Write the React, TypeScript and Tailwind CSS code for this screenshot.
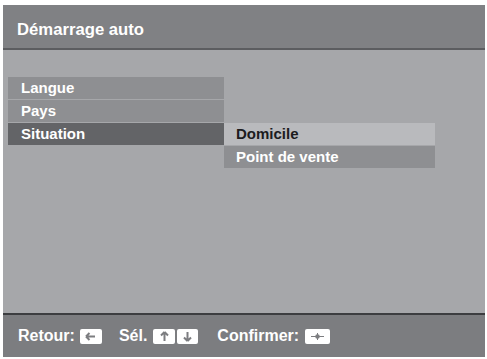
import React from 'react';

// Small white key caps shown in the help bar
const Key = ({ children, w = 'w-[22px]' }: { children: React.ReactNode; w?: string }) => (
  <span className={`inline-flex h-[15px] ${w} items-center justify-center rounded-[2px] bg-white`}>
    {children}
  </span>
);

const ArrowLeft = () => (
  <svg width="11" height="9" viewBox="0 0 11 9">
    <path d="M1 4.5H10M1 4.5L4.5 1M1 4.5L4.5 8" stroke="#7c7d80" strokeWidth="2" fill="none" />
  </svg>
);

const ArrowUp = () => (
  <svg width="9" height="11" viewBox="0 0 9 11">
    <path d="M4.5 1V10M4.5 1L1 4.5M4.5 1L8 4.5" stroke="#7c7d80" strokeWidth="2" fill="none" />
  </svg>
);

const ArrowDown = () => (
  <svg width="9" height="11" viewBox="0 0 9 11">
    <path d="M4.5 10V1M4.5 10L1 6.5M4.5 10L8 6.5" stroke="#7c7d80" strokeWidth="2" fill="none" />
  </svg>
);

const Center = () => (
  <svg width="15" height="9" viewBox="0 0 15 9">
    <path d="M1 4.5H14M7.5 1V8" stroke="#7c7d80" strokeWidth="1" fill="none" />
    <circle cx="7.5" cy="4.5" r="2.3" fill="#7c7d80" />
  </svg>
);

const items = ['Langue', 'Pays', 'Situation'];
const options = ['Domicile', 'Point de vente'];

export default function App() {
  return (
    <div
      className="w-[487px] h-[359px] bg-white pt-[5px] pl-[3px]"
      style={{ fontFamily: '"Liberation Sans", Arial, sans-serif' }}
    >
      <div className="flex h-[352px] w-[482px] flex-col bg-[#a6a7aa]">
        {/* Title */}
        <div className="flex h-[45px] items-center border-b-2 border-[#5c5d60] bg-[#808184] pl-[14px] pt-[6px] text-[16.7px] font-bold text-white">
          Démarrage auto
        </div>

        {/* Menu */}
        <div className="flex flex-1 pl-[5px] pt-[27px]">
          <div className="flex w-[216px] flex-col gap-px">
            {items.map((it) => (
              <div
                key={it}
                className={`flex h-[22px] items-center pl-[13px] text-[15px] font-bold text-white ${
                  it === 'Situation' ? 'bg-[#636467]' : 'bg-[#8e8f92]'
                }`}
              >
                {it}
              </div>
            ))}
          </div>
          <div className="mt-[46px] flex w-[211px] flex-col gap-px">
            {options.map((o, i) => (
              <div
                key={o}
                className={`flex h-[22px] items-center pl-[12px] text-[15px] font-bold ${
                  i === 0 ? 'bg-[#b9babd] text-[#1c1c1e]' : 'bg-[#8e8f92] text-white'
                }`}
              >
                {o}
              </div>
            ))}
          </div>
        </div>

        {/* Help bar */}
        <div className="flex h-[44px] items-center border-t-2 border-[#3c3d40] bg-[#7c7d80] pl-[15px] text-[16px] font-bold text-white">
          <span>Retour:</span>
          <span className="ml-[5px]">
            <Key>
              <ArrowLeft />
            </Key>
          </span>
          <span className="ml-[17px]">Sél.</span>
          <span className="ml-[6px] flex gap-[2px]">
            <Key>
              <ArrowUp />
            </Key>
            <Key w="w-[21px]">
              <ArrowDown />
            </Key>
          </span>
          <span className="ml-[19px]">Confirmer:</span>
          <span className="ml-[6px] flex">
            <Key w="w-[25px]">
              <Center />
            </Key>
          </span>
        </div>
      </div>
    </div>
  );
}
